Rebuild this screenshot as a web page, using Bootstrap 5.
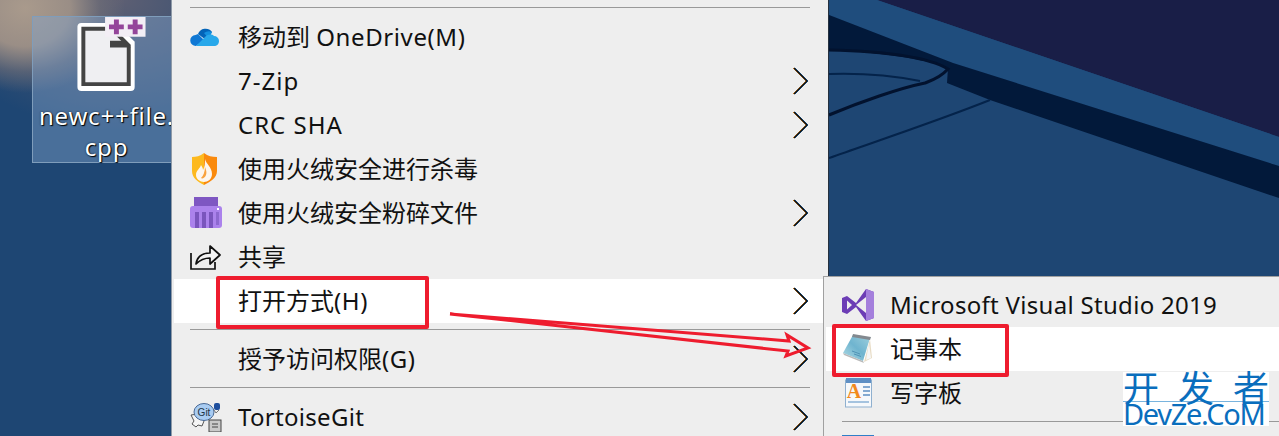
<!DOCTYPE html>
<html lang="zh">
<head>
<meta charset="utf-8">
<title>Context menu</title>
<link href="https://cdn.jsdelivr.net/npm/bootstrap@5.3.0/dist/css/bootstrap.min.css" rel="stylesheet">
<style>
html,body{margin:0;background:#1e4673;overflow:hidden}
.desk{position:relative;width:1279px;height:436px;overflow:hidden;font-family:"Noto Sans","Noto Sans CJK SC",sans-serif;
 background:radial-gradient(ellipse 100px 85px at 25px 8px,#a99a8c 0,#9a8e86 45%,rgba(120,115,120,.55) 75%,rgba(30,70,115,0) 100%),radial-gradient(ellipse 190px 130px at 120px 0,#5d5f73 0,rgba(30,70,115,0) 100%),#1e4673}
.wall{position:absolute;left:829px;top:0}
.sel-box{position:absolute;left:32px;top:16px;width:145px;height:147px;background:rgba(130,165,205,.44);border:1px solid #7f9dbb;display:flex;flex-direction:column;align-items:center}
.file-ico{display:block;margin-left:11px}
.file-name{color:#fff;font-size:24px;line-height:31px;letter-spacing:.8px;text-align:center;text-shadow:1px 1px 1px #000,0 0 2px #123;margin:8px 0 0 4px;white-space:nowrap}
.cmenu.dropdown-menu{display:block;position:absolute;margin:0;border-radius:0;background:#eee;font-size:24px;min-width:0;color:#111;z-index:5}
.main-m.dropdown-menu{left:171px;top:0;width:658px;padding:1px 0 0;border:0;border-left:1px solid #8e9aa8;border-right:1px solid #25303e}
.sub-m.dropdown-menu{left:823px;top:276px;width:470px;padding:6px 0 0;border:1px solid #a0a0a0;z-index:6}
.cmenu .dropdown-divider{margin:6px 18px 7px;border-top:1px solid #999;opacity:1}
.sub-m .dropdown-divider{margin:6px 0 7px 18px}
.cmenu .dropdown-item{height:44px;padding:0 19px 0 18px;color:#111;font-size:24px;line-height:44px;display:flex;align-items:center;background:transparent}
.cmenu .dropdown-item.on{background:linear-gradient(to right,#eee 2px,#fff 2px)}
.ico-slot{width:48px;flex:none;display:flex;align-items:center;justify-content:flex-start}
.chev{margin-left:auto;flex:none}
.lat{letter-spacing:.3px}
.lat-w{letter-spacing:.6px}
.lat-x{letter-spacing:1px}
.red-box{position:absolute;border:4px solid #ee1c2e;border-radius:2px;z-index:8}
.rb-a{left:216px;top:276px;width:213px;height:53px}
.rb-b{left:832px;top:324px;width:177px;height:53px}
.arrow-over{position:absolute;left:440px;top:305px;z-index:8}
.mark-box{position:absolute;left:1123px;top:372px;width:146px;height:54px;background:#fff;color:#0a6ebd;display:flex;flex-direction:column;z-index:8}
.mark-cn{height:30px;line-height:29px;font-size:36px;font-family:"Noto Sans CJK SC",sans-serif;display:flex;justify-content:space-between;border-bottom:1px solid #79b4de}
.mark-en{height:24px;line-height:23px;font-size:29px;font-family:"Noto Sans",sans-serif;white-space:nowrap;letter-spacing:-1.3px}
</style>
</head>
<body>
<div class="desk">
 <svg class="wall" width="450" height="280" viewBox="829 0 450 280">
  <rect x="829" y="0" width="450" height="280" fill="#1e4673"/>
  <polygon points="877,0 1279,0 1279,137" fill="#191e47"/>
  <polygon points="829,0 877,0 1279,137 1279,166 953,63 829,15" fill="#1f4d7d"/>
  <path d="M829 15L953 63L1279 166V198L990 100L947 83L948 68C930 60 880 52 829 50Z" fill="#02193a"/>
  <path d="M829 50C870 51 925 55 948 69C940 78 930 81 925 83C900 88 860 102 829 115" fill="none" stroke="#02122e" stroke-width="3"/>
  <path d="M829 74C860 73 890 75 920 81" fill="none" stroke="#04234a" stroke-width="2"/>
  <path d="M829 158C880 140 940 120 990 100" fill="none" stroke="#04234a" stroke-width="2"/>
 </svg>

 <div class="sel-box">
  <svg class="file-ico" width="76" height="76" viewBox="0 0 76 76">
   <path d="M9 6H44L63 25V71a4 4 0 0 1-4 4H9a4 4 0 0 1-4-4V10a4 4 0 0 1 4-4z" fill="#fff"/>
   <path d="M11 12H40L57 29V68H11z" fill="#efeff2" stroke="#444" stroke-width="4"/>
   <path d="M38 24H52L59 31H38z" fill="#444"/>
   <rect x="33" y="0" width="41" height="20" fill="#f3eef5"/>
   <path d="M37 10h5V5h5v5h5v5h-5v5h-5v-5h-5z" transform="translate(0 -2.500)" fill="#94459a"/>
   <path d="M56 10h5V5h5v5h5v5h-5v5h-5v-5h-5z" transform="translate(0 -2.500)" fill="#94459a"/>
  </svg>
  <div class="file-name">newc++file.<br>cpp</div>
 </div>

 <div class="cmenu main-m dropdown-menu show">
  <div class="dropdown-divider"></div>
  <a class="dropdown-item" href="#"><span class="ico-slot">
   <svg width="30" height="20" viewBox="0 0 30 20"><path d="M8 7a8 8 0 0 1 14-2l-6 8z" fill="#0364b8"/><path d="M6 19a5.500 5.500 0 0 1-.5-11L8 7l6 6z" fill="#0f78d4"/><path d="M14 6a8 8 0 0 1 8-1l-3 7z" fill="#1490df"/><path d="M6 19l9-9c3-3 7-3 9-1a5 5 0 0 1 5 5c0 3-2 5-5 5z" fill="#28a8ea"/></svg></span><span>移动到 <span class="lat-w">OneDrive(M)</span></span></a>
  <a class="dropdown-item" href="#"><span class="ico-slot"></span><span class="lat-x">7-Zip</span><svg class="chev" width="16" height="28" viewBox="0 0 16 28"><path d="M1 1l13 13L1 27" fill="none" stroke="#f09020" stroke-width="1" transform="translate(-1 0)"/><path d="M1 1l13 13L1 27" fill="none" stroke="#1a7ad0" stroke-width="1" transform="translate(1 0)"/><path d="M1 1l13 13L1 27" fill="none" stroke="#111" stroke-width="1.500"/></svg></a>
  <a class="dropdown-item" href="#"><span class="ico-slot"></span><span class="lat-x">CRC SHA</span><svg class="chev" width="16" height="28" viewBox="0 0 16 28"><path d="M1 1l13 13L1 27" fill="none" stroke="#f09020" stroke-width="1" transform="translate(-1 0)"/><path d="M1 1l13 13L1 27" fill="none" stroke="#1a7ad0" stroke-width="1" transform="translate(1 0)"/><path d="M1 1l13 13L1 27" fill="none" stroke="#111" stroke-width="1.500"/></svg></a>
  <a class="dropdown-item" href="#"><span class="ico-slot">
   <svg width="30" height="34" viewBox="0 0 30 34"><path d="M14 1C10 4 6 5 2 5v14c0 7 6 11 12 14z" fill="#fdb91e"/><path d="M14 1c4 3 8 4 13 4v14c0 7-7 11-13 14z" fill="#fa8a0d"/><path d="M15 7c1 5 7 8 7 15 0 5-4 8-8 8s-8-3-8-7c0-5 4-6 5-10 1 2 2 3 2 5 2-3 2-7 2-11z" fill="#fdf6ee"/><path d="M15 15c1 3 2 5 1 8s-4 4-5 3c2-2 4-6 4-11z" fill="#f9a23e"/></svg></span>使用火绒安全进行杀毒</a>
  <a class="dropdown-item" href="#"><span class="ico-slot">
   <svg width="32" height="32" viewBox="0 0 32 32"><rect x="4" y="0" width="24" height="9" fill="#7e57c2"/><rect x="0" y="9" width="32" height="22" rx="3" fill="#ab82ec"/><path d="M5 15h4v16H5zM12 15h4v16h-4zM19 15h4v16h-4z" fill="#7a55bd"/><rect x="26" y="15" width="3" height="13" fill="#8d68d0"/><rect x="27" y="11" width="2" height="2" fill="#fff"/></svg></span>使用火绒安全粉碎文件<svg class="chev" width="16" height="28" viewBox="0 0 16 28"><path d="M1 1l13 13L1 27" fill="none" stroke="#f09020" stroke-width="1" transform="translate(-1 0)"/><path d="M1 1l13 13L1 27" fill="none" stroke="#1a7ad0" stroke-width="1" transform="translate(1 0)"/><path d="M1 1l13 13L1 27" fill="none" stroke="#111" stroke-width="1.500"/></svg></a>
  <a class="dropdown-item" href="#"><span class="ico-slot">
   <svg width="31" height="28" viewBox="0 0 31 28"><path d="M1 10v16h24v-7" fill="none" stroke="#111" stroke-width="1.700"/><path d="M6 21c1-7 6-11 14-11V3l10 9-10 9v-6c-6 0-10 2-14 6z" fill="#f4f4f4" stroke="#111" stroke-width="1.700" stroke-linejoin="round"/></svg></span>共享</a>
  <a class="dropdown-item on" href="#"><span class="ico-slot"></span><span>打开方式<span class="lat-w">(H)</span></span><svg class="chev" width="16" height="28" viewBox="0 0 16 28"><path d="M1 1l13 13L1 27" fill="none" stroke="#f09020" stroke-width="1" transform="translate(-1 0)"/><path d="M1 1l13 13L1 27" fill="none" stroke="#1a7ad0" stroke-width="1" transform="translate(1 0)"/><path d="M1 1l13 13L1 27" fill="none" stroke="#111" stroke-width="1.500"/></svg></a>
  <div class="dropdown-divider"></div>
  <a class="dropdown-item" href="#"><span class="ico-slot"></span><span>授予访问权限<span class="lat-w">(G)</span></span><svg class="chev" width="16" height="28" viewBox="0 0 16 28"><path d="M1 1l13 13L1 27" fill="none" stroke="#f09020" stroke-width="1" transform="translate(-1 0)"/><path d="M1 1l13 13L1 27" fill="none" stroke="#1a7ad0" stroke-width="1" transform="translate(1 0)"/><path d="M1 1l13 13L1 27" fill="none" stroke="#111" stroke-width="1.500"/></svg></a>
  <div class="dropdown-divider"></div>
  <a class="dropdown-item" href="#"><span class="ico-slot">
   <svg width="32" height="30" viewBox="0 0 32 30"><path d="M1 13l7-1 6 7-2 5-4-1-2 2-4-3 2-3z" fill="#f5f5f5" stroke="#555"/><ellipse cx="14" cy="10" rx="10" ry="8.500" fill="#a9ccf2" stroke="#4a6a95"/><text x="14" y="14" font-size="10" text-anchor="middle" fill="#234" font-family="Liberation Sans,sans-serif">Git</text><path d="M24 8l2 3 3-3" fill="#eee" stroke="#777"/><rect x="24" y="1" width="6" height="7" rx="2" fill="#1f4f9e"/><rect x="19" y="18" width="12" height="12" fill="#c9c9c9" stroke="#444"/><path d="M22 22h6M22 25h6" stroke="#444"/></svg></span><span class="lat">TortoiseGit</span><svg class="chev" width="16" height="28" viewBox="0 0 16 28"><path d="M1 1l13 13L1 27" fill="none" stroke="#f09020" stroke-width="1" transform="translate(-1 0)"/><path d="M1 1l13 13L1 27" fill="none" stroke="#1a7ad0" stroke-width="1" transform="translate(1 0)"/><path d="M1 1l13 13L1 27" fill="none" stroke="#111" stroke-width="1.500"/></svg></a>
 </div>

 <div class="cmenu sub-m dropdown-menu show">
  <a class="dropdown-item" href="#"><span class="ico-slot">
   <svg width="32" height="32" viewBox="0 0 32 32"><path d="M0 9l5-2 9 7L24 0l8 3v26l-8 3-10-14-9 7-5-2z" fill="#6c3db5"/><path d="M24 0l8 3v26l-8 3z" fill="#a47fdc"/><path d="M24 8v16l-10-8z" fill="#eee"/><path d="M5 11.500l5 4.500-5 4.500z" fill="#eee"/></svg></span><span class="lat">Microsoft Visual Studio 2019</span></a>
  <a class="dropdown-item on" href="#"><span class="ico-slot">
   <svg width="30" height="30" viewBox="0 0 30 30"><defs><linearGradient id="npg" x1="0" y1="1" x2="1" y2="0"><stop offset="0" stop-color="#b4dde6"/><stop offset=".5" stop-color="#6fb4cf"/><stop offset="1" stop-color="#9fd0dd"/></linearGradient></defs><path d="M11 1L28 4L21 27L1 19Z" fill="url(#npg)"/><path d="M28 5L30 24L22 28Z" fill="#e8dcc5"/><path d="M27 9L24 26L29 24Z" fill="#f6f6f6"/><path d="M11 0L29 3L28 6L10 3Z" fill="#83898f"/><path d="M10 17l8 3M12 20l7 2.500" stroke="#4f93b5"/><path d="M1 19L21 27L22 29L2 21Z" fill="#b9b9b9"/></svg></span>记事本</a>
  <a class="dropdown-item" href="#"><span class="ico-slot">
   <svg width="28" height="30" viewBox="0 0 28 30" style="margin-left:3px"><rect x="0.500" y="2" width="26" height="27" fill="#f6f8fb" stroke="#8fb0cf"/><rect x="1" y="0" width="25" height="5" fill="#5f8fc4"/><text x="9" y="20" font-size="20" font-weight="700" fill="#f28a1e" text-anchor="middle" font-family="Liberation Serif,serif">A</text><path d="M18 9h7M18 13h7M18 17h7" stroke="#5f8fc4" stroke-width="1.500"/><path d="M3 24h21" stroke="#a5c3df" stroke-width="2"/></svg></span>写字板</a>
  <div class="dropdown-divider"></div>
  <a class="dropdown-item align-items-start" href="#"><span class="ico-slot"><svg width="32" height="8" viewBox="0 0 32 8" style="margin-top:6px"><rect width="32" height="2" fill="#2f7fc8"/></svg></span></a>
 </div>

 <div class="red-box rb-a"></div>
 <div class="red-box rb-b"></div>
 <svg class="arrow-over" width="375" height="60" viewBox="440 305 375 60">
  <path d="M450 314L789 341L787 335L808 348L786 356L788 351Z" fill="none" stroke="#ee1c2e" stroke-width="3" stroke-linejoin="miter"/>
 </svg>
 <div class="mark-box">
  <div class="mark-cn"><span>开</span><span>发</span><span>者</span></div>
  <div class="mark-en">DevZe.CoM</div>
 </div>
</div>
<script src="https://cdn.jsdelivr.net/npm/bootstrap@5.3.0/dist/js/bootstrap.bundle.min.js"></script>
</body>
</html>
